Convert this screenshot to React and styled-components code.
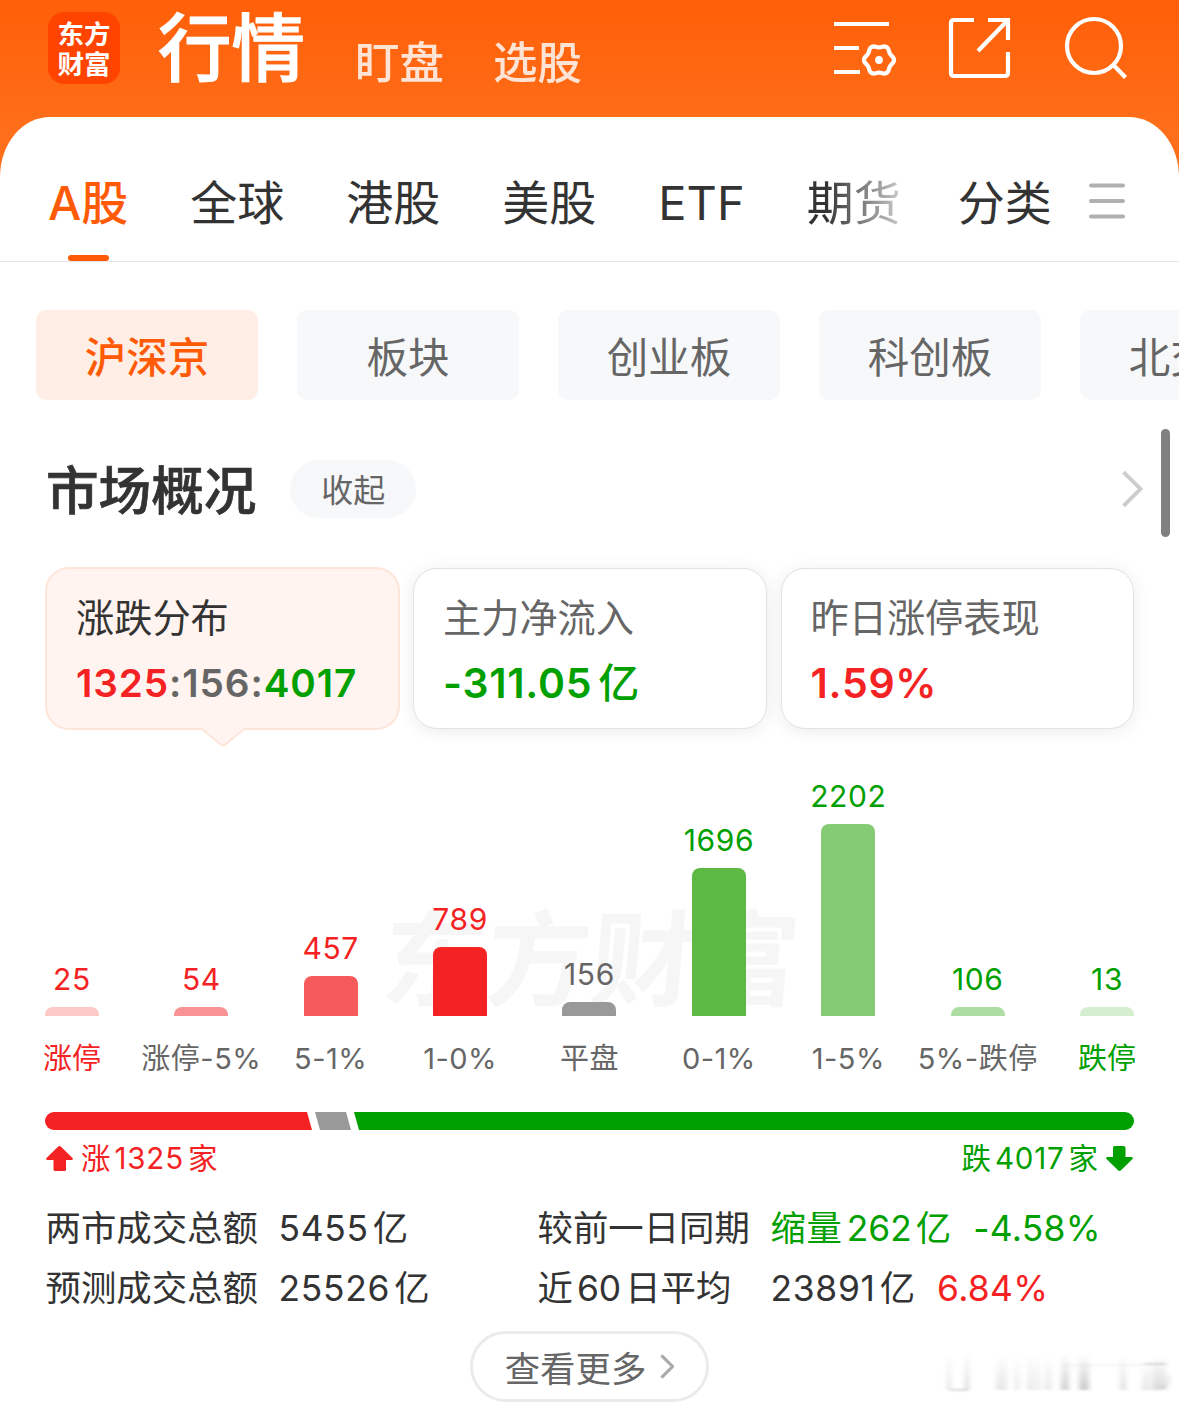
import React, { useState } from "react";
import styled, { createGlobalStyle } from "styled-components";

const RED = "#f42222";
const GREEN = "#00a000";
const ORANGE = "#ff5a05";

const GlobalStyle = createGlobalStyle`
  * {
    box-sizing: border-box;
  }
  body {
    margin: 0;
    overflow: hidden;
    background: #fff;
    color: #333;
    font-family: Inter, "Noto Sans CJK SC", sans-serif;
  }
  button {
    border: 0;
    padding: 0;
    background: none;
    font: inherit;
    color: inherit;
    white-space: nowrap;
  }
`;

const Page = styled.div`
  width: 1179px;
  height: 1402px;
  overflow: hidden;
  background: linear-gradient(#ff5f08, #ff6e1a 130px);
`;

const Header = styled.header`
  display: flex;
  height: 117px;
  padding: 0 52px 0 48px;
`;

const Logo = styled.div`
  width: 72px;
  height: 72px;
  margin-top: 12px;
  padding-top: 7px;
  border-radius: 16px;
  background: #ff4400;
  color: #fff;
  font-size: 26.5px;
  font-weight: 700;
  line-height: 30px;
  text-align: center;
`;

const Nav = styled.nav`
  display: flex;
  align-items: flex-start;
  margin-left: 38px;
  color: #fff;
`;

const NavItem = styled.button`
  margin-right: ${props => (props.$active ? 50 : 49)}px;
  padding-top: ${props => (props.$active ? 1 : 15)}px;
  font-size: ${props => (props.$active ? 73.5 : 44.5)}px;
  font-weight: 500;
  line-height: 96px;
  opacity: ${props => (props.$active ? 1 : 0.82)};
  -webkit-text-stroke: ${props => (props.$active ? 1.2 : 0)}px #fff;
`;

const Tools = styled.div`
  display: flex;
  gap: 51px;
  margin: 15px 0 0 auto;
`;

const Sheet = styled.main`
  height: 1285px;
  background: #fff;
  border-radius: 50px 50px 0 0 / 60px 60px 0 0;
`;

const Tabs = styled.div`
  display: flex;
  height: 145px;
  padding: 55px 54px 0 48px;
  border-bottom: 1px solid #e4e4e6;
`;

const Tab = styled.button`
  display: flex;
  flex: none;
  flex-direction: column;
  align-items: center;
  justify-content: space-between;
  margin-right: 62px;
  font-size: 47px;
  line-height: 62px;
  font-weight: ${props => (props.$active ? 500 : 400)};
  color: ${props => (props.$active ? ORANGE : "#333")};
  ${props =>
    props.$fade &&
    `
    margin-right: 57px;
    color: transparent;
    background: linear-gradient(90deg, #333 20%, #ccc) text;
  `}
  &:nth-last-child(2) {
    margin-right: 0;
  }
  &::after {
    content: "";
    width: 41px;
    height: 6px;
    border-radius: 3px;
    background: ${props => (props.$active ? ORANGE : "transparent")};
  }
`;

const MenuButton = styled.button`
  align-self: flex-start;
  margin: 11px 0 0 auto;
  line-height: 0;
`;

const Chips = styled.div`
  display: flex;
  gap: 39px;
  padding: 48px 0 0 36px;
`;

const Chip = styled.button`
  flex: none;
  width: 222px;
  height: 90px;
  border-radius: 10px;
  font-size: 41.5px;
  font-weight: ${props => (props.$active ? 500 : 400)};
  background: ${props => (props.$active ? "#ffeee6" : "#f7f8fa")};
  color: ${props => (props.$active ? ORANGE : "#666")};
`;

const SectionHead = styled.div`
  display: flex;
  align-items: center;
  height: 108px;
  margin-top: 29px;
  padding-right: 9px;
`;

const Title = styled.h2`
  margin: 16px 34px 0 46px;
  font-size: 52.6px;
  font-weight: 500;
  line-height: 60px;
  -webkit-text-stroke: 0.7px #333;
`;

const Pill = styled.button`
  width: 126px;
  height: 58px;
  margin-top: 12px;
  padding-bottom: 3px;
  border-radius: 29px;
  background: #f7f8fa;
  color: #666;
  font-size: 32px;
`;

const More = styled.button`
  margin: 12px 18px 0 auto;
  line-height: 0;
`;

const ScrollThumb = styled.div`
  width: 9px;
  height: 108px;
  border-radius: 5px;
  background: #808080;
`;

const Cards = styled.div`
  display: flex;
  gap: 14px;
  height: 161px;
  margin-top: 31px;
  padding: 0 45px;
`;

const Card = styled.button`
  position: relative;
  flex: 1;
  padding: 0 0 0 29px;
  border: 1px solid #e2e2e2;
  border-radius: 24px;
  background: #fff;
  box-shadow: 0 2px 18px rgba(0, 0, 0, 0.08);
  text-align: left;
  color: #666;
  ${props =>
    props.$active &&
    `
    flex: 0 0 355px;
    margin: -1px -1px;
    margin-left: 0;
    border: 2px solid #fde5da;
    background: #fff4ef;
    box-shadow: none;
    color: #333;
  `}
`;

const CardTitle = styled.div`
  margin-top: 4px;
  font-size: 38.2px;
  line-height: 56px;
`;

const CardValue = styled.div`
  margin-top: 9px;
  font-size: ${props => (props.$small ? 38.7 : 41)}px;
  font-weight: 600;
  line-height: 56px;
  letter-spacing: ${props => (props.$small ? 0.9 : 0.7)}px;
  color: ${props => props.$color};
`;

const Colored = styled.span`
  color: ${props => props.$color};
`;

const Unit = styled.span`
  margin-left: ${props => (props.$bold ? 6 : 4)}px;
  font-weight: ${props => (props.$bold ? 500 : 400)};
  letter-spacing: ${props => props.$spacing || 0}px;
`;

const Pointer = styled.svg`
  position: absolute;
  left: 155px;
  bottom: -19px;
`;

const Chart = styled.div`
  position: relative;
  display: grid;
  grid-template-columns: repeat(9, 129.4px);
  justify-content: center;
  height: 352px;
`;

const Watermark = styled.div`
  position: absolute;
  left: 383px;
  top: 156px;
  color: #f6f6f6;
  font-size: 104px;
  font-weight: 700;
  line-height: 150px;
  transform: skewX(-5deg);
`;

const Column = styled.div`
  position: relative;
  display: flex;
  flex-direction: column;
  align-items: center;
  justify-content: flex-end;
  white-space: nowrap;
`;

const Count = styled.div`
  font-size: 30px;
  line-height: 36px;
  letter-spacing: 0.6px;
  color: ${props => props.$color};
`;

const Bar = styled.div`
  width: 54px;
  margin-top: 10px;
  border-radius: 8px 8px 0 0;
  background: ${props => props.$color};
`;

const BarLabel = styled.div`
  height: 65px;
  padding-top: 22px;
  font-size: 29px;
  line-height: 42px;
  letter-spacing: ${props => (props.$color ? 0 : 0.5)}px;
  color: ${props => props.$color || "#666"};
`;

const Ratio = styled.div`
  display: flex;
  gap: 3px;
  height: 18px;
  margin: 31px 45px 0;
  border-radius: 9px;
  overflow: hidden;
`;

const RatioPart = styled.div`
  flex: ${props => props.$flex};
  background: ${props => props.$color};
  clip-path: ${props =>
    props.$first
      ? "polygon(0 0, calc(100% - 5px) 0, 100% 100%, 0 100%)"
      : props.$last
      ? "polygon(0 0, 100% 0, 100% 100%, 5px 100%)"
      : "polygon(0 0, calc(100% - 5px) 0, 100% 100%, 5px 100%)"};
`;

const Totals = styled.div`
  display: flex;
  justify-content: space-between;
  margin-top: 7px;
  padding: 0 46px;
`;

const Total = styled.div`
  display: flex;
  align-items: center;
  gap: 8px;
  font-size: 29.5px;
  line-height: 42px;
  color: ${props => props.$color};
`;

const Stats = styled.div`
  display: grid;
  grid-template-columns: 233px 259px 233px 1fr;
  grid-auto-rows: 60px;
  align-items: center;
  margin-top: 16px;
  padding-left: 45.5px;
  font-size: 35.4px;
  white-space: nowrap;
`;

const StatValue = styled.div`
  letter-spacing: 0.7px;
  color: ${props => props.$color};
`;

const Change = styled.span`
  margin-left: 22px;
  letter-spacing: 0.3px;
  color: ${props => props.$color};
`;

const Footer = styled.div`
  display: flex;
  justify-content: center;
  margin-top: 16px;
`;

const MoreButton = styled.button`
  display: flex;
  align-items: center;
  justify-content: center;
  gap: 14px;
  width: 239px;
  height: 71px;
  border: 3px solid #ebebeb;
  border-radius: 36px;
  color: #666;
  font-size: 35.4px;
`;

const Corner = styled.div`
  position: absolute;
  left: 942px;
  top: 1349px;
  line-height: 0;
`;

const navItems = ["行情", "盯盘", "选股"];
const tabs = ["A股", "全球", "港股", "美股", "ETF", "期货", "分类"];
const chips = ["沪深京", "板块", "创业板", "科创板", "北交所"];

const columns = [
  { label: "涨停", count: 25, height: 9, bar: "#fcc8c8", text: RED, mark: true },
  { label: "涨停-5%", count: 54, height: 9, bar: "#f99292", text: RED },
  { label: "5-1%", count: 457, height: 40, bar: "#f65a5a", text: RED },
  { label: "1-0%", count: 789, height: 69, bar: "#f42222", text: RED },
  { label: "平盘", count: 156, height: 14, bar: "#999", text: "#666" },
  { label: "0-1%", count: 1696, height: 148, bar: "#5bb944", text: GREEN },
  { label: "1-5%", count: 2202, height: 192, bar: "#84cc73", text: GREEN },
  { label: "5%-跌停", count: 106, height: 9, bar: "#aedda3", text: GREEN },
  { label: "跌停", count: 13, height: 9, bar: "#d6eed0", text: GREEN, mark: true }
];

// six soft lobes around (46, 45)
const gear = Array.from({ length: 72 }, (_, i) => {
  const a = (i * Math.PI) / 36;
  const r = 13.8 + 1.2 * Math.cos(6 * a);
  return `${(46 + r * Math.cos(a)).toFixed(2)},${(45 + r * Math.sin(a)).toFixed(2)}`;
}).join(" ");

const SettingsIcon = () => (
  <svg width="64" height="64" viewBox="0 0 64 64" fill="none" stroke="#fff" strokeWidth="4.2">
    <path d="M1 9h55M1 33h25M1 57h26" />
    <polygon points={gear} strokeLinejoin="round" />
    <circle cx="46" cy="45" r="3.9" fill="#fff" stroke="none" />
  </svg>
);

const ShareIcon = () => (
  <svg width="64" height="64" viewBox="0 0 64 64" fill="none" stroke="#fff" strokeWidth="4.2">
    <path d="M26 5H6q-3 0-3 3v50q0 3 3 3h51q3 0 3-3V37M40 5h20v20M60 5 30 36" />
  </svg>
);

const SearchIcon = () => (
  <svg width="64" height="64" viewBox="0 0 64 64" fill="none" stroke="#fff" strokeWidth="4.2">
    <circle cx="31" cy="31" r="27" />
    <path d="m49.500 49 13 13.500" />
  </svg>
);

const MenuIcon = () => (
  <svg width="36" height="36" stroke="#b0b0b0" strokeWidth="4" strokeLinecap="round">
    <path d="M2 2.500h32M2 18h32M2 33.500h32" />
  </svg>
);

const Chevron = ({ width, height, color, stroke }) => (
  <svg width={width} height={height} viewBox="0 0 20 36" fill="none" stroke={color} strokeWidth={stroke}>
    <path d="m2 2 16 16L2 34" />
  </svg>
);

const Arrow = ({ color, down }) => (
  <svg width="27" height="25" viewBox="0 0 27 25" fill={color}>
    <path
      transform={down ? "rotate(180 13.5 12.5)" : undefined}
      d="M12 .7q1.500-1.200 3 0L26.500 12q1 2-1 2H20v9.500q0 1.500-1.500 1.500h-9Q7.500 25 7.500 23.500V14h-6q-2 0-1-2z"
    />
  </svg>
);

// x, width, height, opacity
const strokes = [
  [5, 4, 38, 0.09],
  [23, 4, 38, 0.13],
  [54, 11, 34, 0.08],
  [72, 6, 34, 0.06],
  [86, 5, 36, 0.09],
  [94, 3, 36, 0.11],
  [102, 8, 34, 0.07],
  [119, 8, 36, 0.15],
  [137, 10, 36, 0.17],
  [178, 6, 34, 0.1],
  [200, 8, 28, 0.08],
  [210, 14, 34, 0.12]
];

const Smudge = () => (
  <svg width="236" height="46" viewBox="0 0 236 46">
    <defs>
      <linearGradient id="fade" x1="0" y1="0" x2="0" y2="1">
        <stop offset="0" stopOpacity="0" />
        <stop offset="1" />
      </linearGradient>
      <filter id="soft">
        <feGaussianBlur stdDeviation="2.4 1" />
      </filter>
    </defs>
    <g filter="url(#soft)">
      {strokes.map(([x, w, h, o]) => (
        <rect key={x} x={x} y={41 - h} width={w} height={h} fill="url(#fade)" opacity={o * 1.2} />
      ))}
      <path d="M8 41h17M202 15h22" stroke="#000" strokeOpacity=".15" strokeWidth="2" />
      <path d="M120 16h82" stroke="#000" strokeOpacity=".03" strokeWidth="3" />
      <path d="M225 26q4 10-4 13" fill="none" stroke="#000" strokeOpacity=".12" strokeWidth="2" />
    </g>
  </svg>
);

const App = () => {
  const [nav, setNav] = useState("行情");
  const [tab, setTab] = useState("A股");
  const [chip, setChip] = useState("沪深京");

  return (
    <Page>
      <GlobalStyle />
      <Header>
        <Logo>
          东方
          <br />
          财富
        </Logo>
        <Nav>
          {navItems.map(name => (
            <NavItem key={name} $active={name === nav} onClick={() => setNav(name)}>
              {name}
            </NavItem>
          ))}
        </Nav>
        <Tools>
          <SettingsIcon />
          <ShareIcon />
          <SearchIcon />
        </Tools>
      </Header>
      <Sheet>
        <Tabs>
          {tabs.map(name => (
            <Tab
              key={name}
              $active={name === tab}
              $fade={name === "期货"}
              onClick={() => setTab(name)}
            >
              {name}
            </Tab>
          ))}
          <MenuButton>
            <MenuIcon />
          </MenuButton>
        </Tabs>
        <Chips>
          {chips.map(name => (
            <Chip key={name} $active={name === chip} onClick={() => setChip(name)}>
              {name}
            </Chip>
          ))}
        </Chips>
        <SectionHead>
          <Title>市场概况</Title>
          <Pill>收起</Pill>
          <More>
            <Chevron width={22} height={38} color="#ccc" stroke={3.6} />
          </More>
          <ScrollThumb />
        </SectionHead>
        <Cards>
          <Card $active>
            <CardTitle>涨跌分布</CardTitle>
            <CardValue $color="#666" $small>
              <Colored $color={RED}>1325</Colored>:156:
              <Colored $color={GREEN}>4017</Colored>
            </CardValue>
            <Pointer width="42" height="20" viewBox="0 0 42 20">
              <path d="M0 0v2l18 15q3 3 6 0L42 2V0z" fill="#fff4ef" />
              <path d="M0 2 18 17q3 3 6 0L42 2" fill="none" stroke="#fde5da" strokeWidth="2" />
            </Pointer>
          </Card>
          <Card>
            <CardTitle>主力净流入</CardTitle>
            <CardValue $color={GREEN}>
              -311.05<Unit $bold>亿</Unit>
            </CardValue>
          </Card>
          <Card>
            <CardTitle>昨日涨停表现</CardTitle>
            <CardValue $color={RED}>1.59%</CardValue>
          </Card>
        </Cards>
        <Chart>
          <Watermark>东方财富</Watermark>
          {columns.map(col => (
            <Column key={col.label}>
              <Count $color={col.text}>{col.count}</Count>
              <Bar $color={col.bar} style={{ height: col.height }} />
              <BarLabel $color={col.mark && col.text}>{col.label}</BarLabel>
            </Column>
          ))}
        </Chart>
        <Ratio>
          <RatioPart $flex="0 0 267px" $color={RED} $first />
          <RatioPart $flex="0 0 36px" $color="#999" />
          <RatioPart $flex="1" $color={GREEN} $last />
        </Ratio>
        <Totals>
          <Total $color={RED}>
            <Arrow color={RED} />
            <span>
              涨<Unit $spacing={0.8}>1325</Unit>
              <Unit>家</Unit>
            </span>
          </Total>
          <Total $color={GREEN}>
            <span>
              跌<Unit $spacing={0.8}>4017</Unit>
              <Unit>家</Unit>
            </span>
            <Arrow color={GREEN} down />
          </Total>
        </Totals>
        <Stats>
          <div>两市成交总额</div>
          <StatValue>
            5455<Unit>亿</Unit>
          </StatValue>
          <div>较前一日同期</div>
          <StatValue $color={GREEN}>
            缩量<Unit>262</Unit>
            <Unit>亿</Unit>
            <Change>-4.58%</Change>
          </StatValue>
          <div>预测成交总额</div>
          <StatValue>
            25526<Unit>亿</Unit>
          </StatValue>
          <div>
            近<Unit>60</Unit>
            <Unit>日平均</Unit>
          </div>
          <StatValue>
            23891<Unit>亿</Unit>
            <Change $color={RED}>6.84%</Change>
          </StatValue>
        </Stats>
        <Footer>
          <MoreButton>
            查看更多
            <Chevron width={14} height={25} color="#aaa" stroke={4.5} />
          </MoreButton>
        </Footer>
      </Sheet>
      <Corner>
        <Smudge />
      </Corner>
    </Page>
  );
};

export default App;
